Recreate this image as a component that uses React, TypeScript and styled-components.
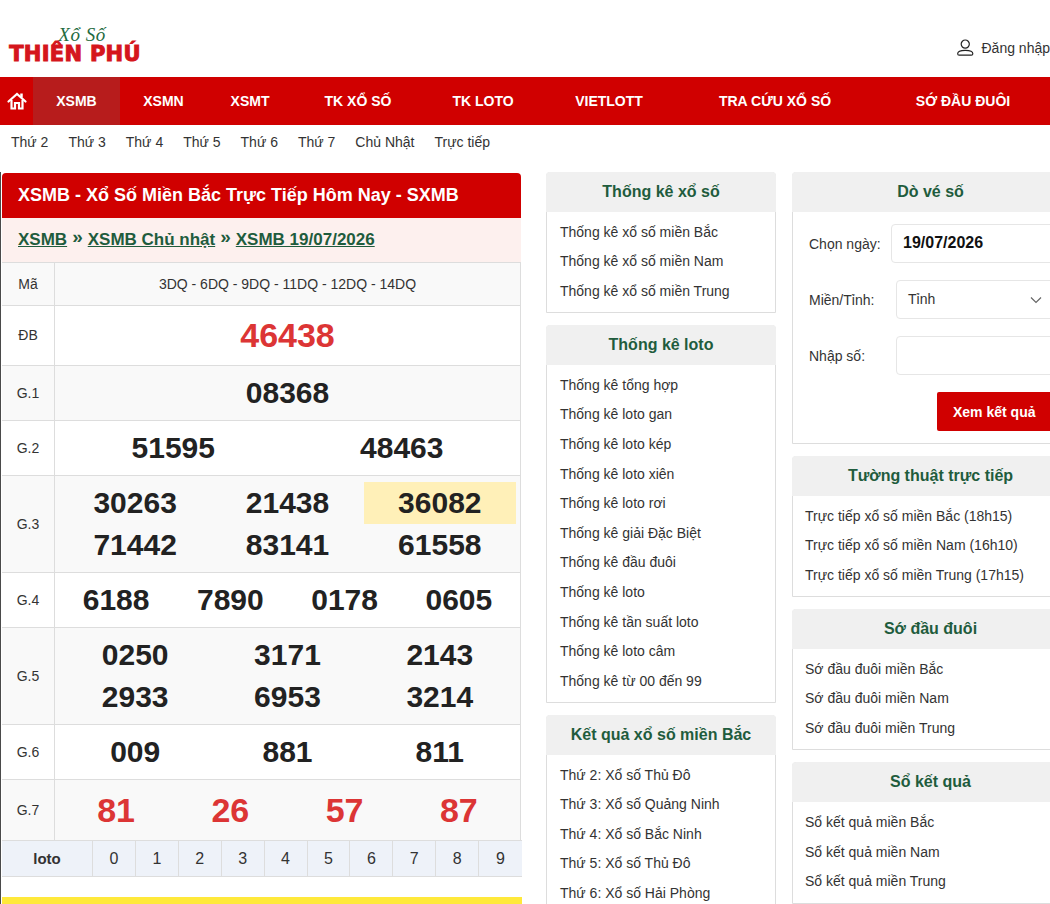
import React from "react";
import styled, { createGlobalStyle } from "styled-components";

const Global = createGlobalStyle`
  html, body { margin: 0; padding: 0; background: #fff; overflow: hidden; height: 904px; }
  body { font-family: "Liberation Sans", Arial, sans-serif; font-size: 14px; color: #333; }
  * { box-sizing: border-box; }
`;

const Page = styled.div`
  width: 1050px;
  height: 904px;
  overflow: hidden;
`;

const Header = styled.header`
  height: 77px;
  display: flex;
  justify-content: space-between;
  align-items: flex-start;
  padding: 26px 0 0 8px;
`;

const Logo = styled.div`
  width: 134px;
  display: flex;
  flex-direction: column;
  align-items: center;
`;

const LogoScript = styled.span`
  font-family: "Liberation Serif", serif;
  font-style: italic;
  font-size: 19px;
  line-height: 17px;
  color: #1f6b3f;
  letter-spacing: 0.5px;
  margin-left: 14px;
`;

const LogoBrand = styled.span`
  font-family: "DejaVu Sans", sans-serif;
  font-weight: 700;
  font-size: 21px;
  line-height: 23px;
  color: #d5161c;
  -webkit-text-stroke: 1px #d5161c;
  letter-spacing: 0.3px;
  white-space: nowrap;
`;

const Account = styled.a`
  display: flex;
  align-items: center;
  gap: 7px;
  margin-top: 13px;
  font-size: 14px;
  color: #333;
  white-space: nowrap;
  width: 93px;
  flex: none;
`;

const Nav = styled.nav`
  height: 48px;
  background: #d00000;
  display: grid;
  grid-template-columns: 33px 87px 87px 86px 130px 120px 132px 200px 176px;
  width: 1051px;
`;

const NavItem = styled.a<{ $active?: boolean }>`
  display: flex;
  align-items: center;
  justify-content: center;
  color: #fff;
  font-weight: 700;
  font-size: 14px;
  white-space: nowrap;
  background: ${(p) => (p.$active ? "#b71c1c" : "transparent")};
`;

const SubNav = styled.div`
  height: 47px;
  display: flex;
  gap: 20px;
  padding: 9px 0 0 11px;
  font-size: 14px;
  line-height: 16px;
  color: #333;
`;

const Main = styled.main`
  display: flex;
  align-items: flex-start;
  border-left: 1px solid #4a4a4a;
  padding-left: 1px;
`;

const LeftColumn = styled.section`
  width: 519px;
  flex: none;
  margin-top: 1px;
  margin-right: 25px;
`;

const Title = styled.h1`
  margin: 0;
  height: 45px;
  padding-left: 16px;
  display: flex;
  align-items: center;
  background: #d00000;
  color: #fff;
  font-size: 18px;
  font-weight: 700;
  border-radius: 4px 4px 0 0;
  white-space: nowrap;
`;

const Crumbs = styled.div`
  height: 44px;
  padding: 0 0 1px 16px;
  display: flex;
  align-items: center;
  gap: 5px;
  background: #fdf0ee;
  font-size: 17px;
  font-weight: 700;
  color: #1f5c3d;
`;

const CrumbLink = styled.a`
  color: #1f5c3d;
  text-decoration: underline;
`;

const CrumbSep = styled.span`
  color: #1f5c3d;
  font-size: 19px;
  position: relative;
  top: -3px;
`;

const ResultRow = styled.div<{ $h: number; $shade?: boolean }>`
  display: grid;
  grid-template-columns: 53px 1fr;
  height: ${(p) => p.$h}px;
  border-top: 1px solid #ddd;
  border-right: 1px solid #ddd;
  background: ${(p) => (p.$shade ? "#f9f9f9" : "#fff")};
`;

const RowLabel = styled.div`
  display: flex;
  align-items: center;
  justify-content: center;
  border-right: 1px solid #ddd;
  padding-bottom: 1px;
  font-size: 14px;
  color: #333;
`;

const CodeCell = styled.div`
  display: flex;
  align-items: center;
  justify-content: center;
  padding-bottom: 1px;
  font-size: 14px;
  color: #333;
`;

const Numbers = styled.div<{ $cols: number }>`
  display: grid;
  grid-template-columns: repeat(${(p) => p.$cols}, 1fr);
  align-content: center;
  padding: 0 4px;
`;

const Num = styled.div<{ $size?: number; $red?: boolean; $hl?: boolean }>`
  height: 42px;
  display: flex;
  align-items: center;
  justify-content: center;
  font-weight: 700;
  font-size: ${(p) => p.$size ?? 30}px;
  color: ${(p) => (p.$red ? "#dc3535" : "#222")};
  background: ${(p) => (p.$hl ? "#fff0b8" : "transparent")};
`;

const LotoRow = styled.div`
  display: grid;
  grid-template-columns: 91px repeat(10, 1fr);
  height: 37px;
  border-top: 1px solid #ddd;
  border-bottom: 1px solid #ddd;
  background: #eef2f9;
  width: 520px;
`;

const LotoCell = styled.div<{ $head?: boolean }>`
  display: flex;
  align-items: center;
  justify-content: center;
  border-right: 1px solid #ddd;
  font-size: ${(p) => (p.$head ? 15 : 16)}px;
  font-weight: ${(p) => (p.$head ? 700 : 400)};
  color: #333;
  &:last-child { border-right: 0; }
`;

const YellowBar = styled.div`
  height: 30px;
  margin-top: 20px;
  background: #ffe93b;
  width: 520px;
`;

const SideColumn = styled.aside<{ $w: number; $mr?: number }>`
  width: ${(p) => p.$w}px;
  flex: none;
  margin-right: ${(p) => p.$mr ?? 0}px;
  display: flex;
  flex-direction: column;
  gap: 12px;
`;

const Panel = styled.div`
  border: 1px solid #ddd;
  border-radius: 4px 4px 0 0;
  background: #fff;
`;

const PanelHead = styled.h3`
  margin: -1px -1px 0;
  height: 40px;
  display: flex;
  align-items: center;
  justify-content: center;
  background: #f0f0f0;
  border-radius: 4px 4px 0 0;
  color: #1f5c3d;
  font-size: 16px;
  font-weight: 700;
`;

const PanelList = styled.ul<{ $pad: number }>`
  list-style: none;
  margin: 0;
  padding: 5.600px 0 5.800px ${(p) => p.$pad}px;
`;

const PanelItem = styled.li`
  height: 29.600px;
  line-height: 29.600px;
  font-size: 14px;
  color: #333;
  white-space: nowrap;
`;

const Form = styled.div`
  padding: 12px 0 0 16px;
  height: 231px;
`;

const FormRow = styled.div`
  display: flex;
  align-items: center;
  height: 39px;
  margin-bottom: 17px;
`;

const FormLabel = styled.label<{ $w: number }>`
  width: ${(p) => p.$w}px;
  flex: none;
  font-size: 14px;
  color: #333;
`;

const Field = styled.div`
  flex: 1;
  height: 39px;
  border: 1px solid #e6e6e6;
  border-radius: 4px;
  background: #fff;
  display: flex;
  align-items: center;
  justify-content: space-between;
  padding: 0 14px 1px 11px;
`;

const DateValue = styled.span`
  font-size: 16px;
  font-weight: 700;
  color: #111;
`;

const SelectValue = styled.span`
  font-size: 14px;
  color: #333;
  margin-right: auto;
`;

const Chevron = styled.svg`
  position: relative;
  left: -11px;
  top: 1px;
`;

const SubmitRow = styled.div`
  display: flex;
  padding-left: 128px;
`;

const Submit = styled.button`
  width: 125px;
  height: 39px;
  border: 0;
  border-radius: 2px;
  background: #d00000;
  color: #fff;
  font: 700 14px "Liberation Sans", sans-serif;
  text-align: left;
  padding: 0 0 0 16px;
`;

const HomeIcon = () => (
  <svg width="20" height="20" viewBox="0 0 20 20" fill="none" stroke="#fff" strokeWidth="2.200">
    <path d="M1.500 10.500 10 3l8.500 7.500" strokeLinecap="round" />
    <path d="M4.500 9v8.500h3.500V12h4v5.500h3.500V9" />
    <path d="M14.500 2.500v4" strokeWidth="2.500" />
  </svg>
);

const UserIcon = () => (
  <svg width="18" height="18" viewBox="0 0 18 18" fill="none" stroke="#222" strokeWidth="1.200">
    <circle cx="8.500" cy="5" r="4.200" />
    <path d="M.7 14.900c0-2.400 2.800-3.500 7.800-3.500s7.800 1.100 7.800 3.500c0 1-.6 1.500-1.500 1.500H2.200c-.9 0-1.500-.5-1.500-1.500z" />
  </svg>
);

const lists = {
  tkxs: ["Thống kê xổ số miền Bắc", "Thống kê xổ số miền Nam", "Thống kê xổ số miền Trung"],
  loto: [
    "Thống kê tổng hợp", "Thống kê loto gan", "Thống kê loto kép", "Thống kê loto xiên",
    "Thống kê loto rơi", "Thống kê giải Đặc Biệt", "Thống kê đầu đuôi", "Thống kê loto",
    "Thống kê tần suất loto", "Thống kê loto câm", "Thống kê từ 00 đến 99",
  ],
  kq: [
    "Thứ 2: Xổ số Thủ Đô", "Thứ 3: Xổ số Quảng Ninh", "Thứ 4: Xổ số Bắc Ninh",
    "Thứ 5: Xổ số Thủ Đô", "Thứ 6: Xổ số Hải Phòng",
  ],
  tt: ["Trực tiếp xổ số miền Bắc (18h15)", "Trực tiếp xổ số miền Nam (16h10)", "Trực tiếp xổ số miền Trung (17h15)"],
  dd: ["Sớ đầu đuôi miền Bắc", "Sớ đầu đuôi miền Nam", "Sớ đầu đuôi miền Trung"],
  skq: ["Sổ kết quả miền Bắc", "Sổ kết quả miền Nam", "Sổ kết quả miền Trung"],
};

const navItems = ["XSMN", "XSMT", "TK XỔ SỐ", "TK LOTO", "VIETLOTT", "TRA CỨU XỔ SỐ", "SỚ ĐẦU ĐUÔI"];
const days = ["Thứ 2", "Thứ 3", "Thứ 4", "Thứ 5", "Thứ 6", "Thứ 7", "Chủ Nhật", "Trực tiếp"];

type Row = { label: string; h: number; cols: number; nums: string[]; size?: number; red?: boolean };
const rows: Row[] = [
  { label: "ĐB", h: 60, cols: 1, nums: ["46438"], size: 34, red: true },
  { label: "G.1", h: 55, cols: 1, nums: ["08368"] },
  { label: "G.2", h: 55, cols: 2, nums: ["51595", "48463"] },
  { label: "G.3", h: 97, cols: 3, nums: ["30263", "21438", "36082", "71442", "83141", "61558"] },
  { label: "G.4", h: 55, cols: 4, nums: ["6188", "7890", "0178", "0605"] },
  { label: "G.5", h: 97, cols: 3, nums: ["0250", "3171", "2143", "2933", "6953", "3214"] },
  { label: "G.6", h: 55, cols: 3, nums: ["009", "881", "811"] },
  { label: "G.7", h: 61, cols: 4, nums: ["81", "26", "57", "87"], size: 34, red: true },
];

const ListPanel = ({ title, items, pad }: { title: string; items: string[]; pad: number }) => (
  <Panel>
    <PanelHead>{title}</PanelHead>
    <PanelList $pad={pad}>
      {items.map((t) => (
        <PanelItem key={t}>{t}</PanelItem>
      ))}
    </PanelList>
  </Panel>
);

export default function App() {
  return (
    <Page>
      <Global />
      <Header>
        <Logo>
          <LogoScript>Xổ Số</LogoScript>
          <LogoBrand>THIÊN PHÚ</LogoBrand>
        </Logo>
        <Account>
          <UserIcon />
          Đăng nhập
        </Account>
      </Header>
      <Nav>
        <NavItem><HomeIcon /></NavItem>
        <NavItem $active>XSMB</NavItem>
        {navItems.map((n) => (
          <NavItem key={n}>{n}</NavItem>
        ))}
      </Nav>
      <SubNav>
        {days.map((d) => (
          <span key={d}>{d}</span>
        ))}
      </SubNav>
      <Main>
        <LeftColumn>
          <Title>XSMB - Xổ Số Miền Bắc Trực Tiếp Hôm Nay - SXMB</Title>
          <Crumbs>
            <CrumbLink>XSMB</CrumbLink>
            <CrumbSep>»</CrumbSep>
            <CrumbLink>XSMB Chủ nhật</CrumbLink>
            <CrumbSep>»</CrumbSep>
            <CrumbLink>XSMB 19/07/2026</CrumbLink>
          </Crumbs>
          <ResultRow $h={43} $shade>
            <RowLabel>Mã</RowLabel>
            <CodeCell>3DQ - 6DQ - 9DQ - 11DQ - 12DQ - 14DQ</CodeCell>
          </ResultRow>
          {rows.map((r, i) => (
            <ResultRow key={r.label} $h={r.h} $shade={i % 2 === 1}>
              <RowLabel>{r.label}</RowLabel>
              <Numbers $cols={r.cols}>
                {r.nums.map((n) => (
                  <Num key={n} $size={r.size} $red={r.red} $hl={n === "36082"}>
                    {n}
                  </Num>
                ))}
              </Numbers>
            </ResultRow>
          ))}
          <LotoRow>
            <LotoCell $head>loto</LotoCell>
            {[0, 1, 2, 3, 4, 5, 6, 7, 8, 9].map((d) => (
              <LotoCell key={d}>{d}</LotoCell>
            ))}
          </LotoRow>
          <YellowBar />
        </LeftColumn>
        <SideColumn $w={230} $mr={16}>
          <ListPanel title="Thống kê xổ số" items={lists.tkxs} pad={13} />
          <ListPanel title="Thống kê loto" items={lists.loto} pad={13} />
          <ListPanel title="Kết quả xổ số miền Bắc" items={lists.kq} pad={13} />
        </SideColumn>
        <SideColumn $w={277}>
          <Panel>
            <PanelHead>Dò vé số</PanelHead>
            <Form>
              <FormRow>
                <FormLabel $w={82}>Chọn ngày:</FormLabel>
                <Field><DateValue>19/07/2026</DateValue></Field>
              </FormRow>
              <FormRow>
                <FormLabel $w={87}>Miền/Tỉnh:</FormLabel>
                <Field>
                  <SelectValue>Tỉnh</SelectValue>
                  <Chevron width="12" height="8" viewBox="0 0 12 8" fill="none" stroke="#666" strokeWidth="1.200">
                    <path d="M1 1.500 6 6.500l5-5" />
                  </Chevron>
                </Field>
              </FormRow>
              <FormRow>
                <FormLabel $w={87}>Nhập số:</FormLabel>
                <Field />
              </FormRow>
              <SubmitRow>
                <Submit>Xem kết quả</Submit>
              </SubmitRow>
            </Form>
          </Panel>
          <ListPanel title="Tường thuật trực tiếp" items={lists.tt} pad={12} />
          <ListPanel title="Sớ đầu đuôi" items={lists.dd} pad={12} />
          <ListPanel title="Sổ kết quả" items={lists.skq} pad={12} />
        </SideColumn>
      </Main>
    </Page>
  );
}
